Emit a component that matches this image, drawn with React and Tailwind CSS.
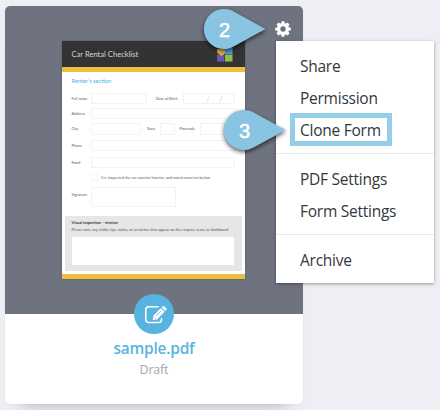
import React from "react";

function Label({ children, className = "" }) {
  return (
    <span className={`shrink-0 whitespace-nowrap text-[3.8px] leading-none text-[#5a5a5a] ${className}`}>
      {children}
    </span>
  );
}

function Field({ className = "" }) {
  return <div className={`shrink-0 border border-[#f3f3f3] ${className}`} />;
}

function FormLogo() {
  return (
    <svg className="h-[16px] w-[16px]" viewBox="0 0 16 16">
      <rect x="8" y="0" width="7.5" height="8" fill="#4a9fd8" />
      <rect x="0" y="8.5" width="7.3" height="7" fill="#6a57b5" />
      <rect x="8" y="8.5" width="7.5" height="7" fill="#8cbf4a" />
      <path d="M0 3h8v4.500L4.500 10 0 6.500z" fill="#e8b040" />
    </svg>
  );
}

function FormPreview() {
  return (
    <div className="flex h-[238px] w-[183px] flex-col bg-white font-['Lato',sans-serif] shadow-[0_0_2px_rgba(0,0,0,0.3)]">
      <div className="flex h-[26px] shrink-0 items-center justify-between bg-[#333] pr-[12px] pl-[9.5px]">
        <span className="pt-px text-[7.6px] leading-none whitespace-nowrap text-[#d6d6d6]">Car Rental Checklist</span>
        <FormLogo />
      </div>
      <div className="h-[5px] shrink-0 bg-[#edbe40]" />
      <div className="flex h-[144px] shrink-0 flex-col pl-[9.5px]">
        <div className="mt-[6px] h-[6px] shrink-0 text-[5.7px] leading-[6px] text-[#4bb8e6]">Renter’s section</div>
        <div className="mt-[9px] flex h-[11px] shrink-0 items-center">
          <Label className="w-[19.5px]">Full name</Label>
          <Field className="h-full w-[56px]" />
          <Label className="ml-[9px] w-[27px]">Date of Birth</Label>
          <div className="flex h-full w-[52px] items-center border border-[#f3f3f3] pl-[22px]">
            <svg className="h-[8px] w-[18px]" viewBox="0 0 18 8" stroke="#dedede" strokeWidth="0.7">
              <path d="M0.5 8 3.5 0M13.5 8 16.5 0" />
            </svg>
          </div>
        </div>
        <div className="mt-[4px] flex h-[11px] shrink-0 items-center">
          <Label className="w-[19.5px]">Address</Label>
          <Field className="h-full w-[144px]" />
        </div>
        <div className="mt-[4px] flex h-[12px] shrink-0 items-center">
          <Label className="w-[19.5px]">City</Label>
          <Field className="h-full w-[50px]" />
          <Label className="ml-[6px] w-[13px]">State</Label>
          <Field className="h-full w-[15px]" />
          <Label className="ml-[4.5px] w-[20px]">Postcode</Label>
          <Field className="h-full w-[35.5px]" />
        </div>
        <div className="mt-[5px] flex h-[11px] shrink-0 items-center">
          <Label className="w-[19.5px]">Phone</Label>
          <Field className="h-full w-[144px]" />
        </div>
        <div className="mt-[6px] flex h-[11px] shrink-0 items-center">
          <Label className="w-[19.5px]">Email</Label>
          <Field className="h-full w-[144px]" />
        </div>
        <div className="mt-[6px] flex h-[7px] shrink-0 items-center pl-[19.5px]">
          <Field className="h-[7px] w-[7px]" />
          <Label className="ml-[3px] text-[3.7px]">I’ve inspected the car exterior/interior, and noted concerns below.</Label>
        </div>
        <div className="mt-[6px] flex h-[20px] shrink-0 items-start">
          <Label className="mt-[6px] w-[19.5px]">Signature</Label>
          <Field className="h-[20px] w-[85px]" />
        </div>
      </div>
      <div className="mx-[3px] h-[55px] shrink-0 bg-[#e6e6e6] pt-[4px] pr-[8px] pl-[6.5px]">
        <div className="h-[6px] text-[3.9px] leading-[6px] font-bold text-[#333]">Visual inspection – interior</div>
        <div className="mt-[1px] h-[6px] text-[3.8px] leading-[6px] whitespace-nowrap text-[#555]">
          Please note any visible rips, stains, or scratches that appear on the carpets, seats, or dashboard.
        </div>
        <div className="mt-[4px] h-[28px] bg-white" />
      </div>
      <div className="mt-[3px] h-[5px] shrink-0 bg-[#edbe40]" />
    </div>
  );
}

function GearIcon() {
  return (
    <svg className="h-[16px] w-[16px]" viewBox="-8 -8 16 16">
      <g fill="#fff">
        {[0, 45, 90, 135, 180, 225, 270, 315].map((angle) => (
          <path key={angle} d="M-2-5-1.35-7.8H1.35L2-5z" transform={`rotate(${angle})`} />
        ))}
      </g>
      <circle r="4.3" fill="none" stroke="#fff" strokeWidth="3.2" />
    </svg>
  );
}

function EditIcon() {
  return (
    <svg className="h-[20px] w-[26px] shrink-0" viewBox="0 0 26 20" fill="none">
      <path
        d="M17 2.800H7.800a3 3 0 0 0-3 3v9.700a3 3 0 0 0 3 3h9.700a3 3 0 0 0 3-3V14.500"
        stroke="#fff"
        strokeWidth="1.500"
        strokeLinecap="round"
      />
      <path d="m11.700 16 .6-4.300 7.600-7.600 3.700 3.700-7.600 7.600z" fill="#fff" />
      <path d="m20.700 3.300 1.100-1.100q.6-.6 1.200 0l2.400 2.400q.6.600 0 1.200l-1.100 1.100z" fill="#fff" />
      <path d="m15 11.900 4.800-4.800" stroke="#57b4e1" strokeWidth=".9" />
      <path d="m12.800 13.300 1.500 1.500" stroke="#57b4e1" strokeWidth=".8" />
    </svg>
  );
}

function Marker({ number, className }) {
  return (
    <div className={`absolute h-[48px] w-[70px] ${className}`}>
      <svg
        className="absolute inset-0 h-[48px] w-[70px] drop-shadow-[0_2px_2px_rgba(0,0,0,0.65)]"
        viewBox="0 0 70 48"
      >
        <path d="M65.5 24 33.600 6.500A20 20 0 1 0 33.600 41.500z" fill="#89c4e2" />
      </svg>
      <span className="relative flex h-[48px] w-[48px] items-center justify-center pt-[2px] pl-px font-['Liberation_Sans',sans-serif] text-[20px] leading-none text-white [-webkit-text-stroke:0.5px_white]">
        {number}
      </span>
    </div>
  );
}

function MenuItem({ children }) {
  return <div className="flex h-8 items-center pt-px pl-6 whitespace-nowrap">{children}</div>;
}

function Menu() {
  return (
    <div className="absolute top-[41px] left-[276px] h-[242px] w-[158px] bg-white pt-[9px] font-['Open_Sans',sans-serif] text-[15.5px] leading-none tracking-[-0.25px] text-[#333740] shadow-[0_1px_3px_rgba(0,0,0,0.38)]">
      <MenuItem>Share</MenuItem>
      <MenuItem>Permission</MenuItem>
      <div className="relative">
        <MenuItem>Clone Form</MenuItem>
        <div className="absolute -top-px left-[14px] h-[33px] w-[102px] border-5 border-[#94cde6]" />
      </div>
      <div className="mt-[7px] mb-[9px] h-px bg-[#e7e7ec]" />
      <MenuItem>PDF Settings</MenuItem>
      <MenuItem>Form Settings</MenuItem>
      <div className="mt-[7px] mb-[9px] h-px bg-[#e7e7ec]" />
      <MenuItem>Archive</MenuItem>
    </div>
  );
}

export default function App() {
  return (
    <div className="relative h-[410px] w-[440px] overflow-hidden bg-[#eeeff4] pt-[6px] pl-[5px]">
      <div className="flex h-[398px] w-[298px] flex-col items-center rounded-[5px] bg-white font-['Open_Sans',sans-serif] shadow-[0_0_1px_rgba(0,0,0,0.15),0_16px_16px_-16px_rgba(60,85,85,0.4)]">
        <div className="flex h-[308px] w-full shrink-0 justify-between rounded-t-[5px] bg-[#6f7380] pt-[35px] pl-[57px]">
          <FormPreview />
          <div className="-mt-[20px] mr-[12px]">
            <GearIcon />
          </div>
        </div>
        <div className="-mt-[20px] flex h-[40px] w-[40px] shrink-0 items-center justify-center rounded-full bg-[#57b4e1]">
          <EditIcon />
        </div>
        <div className="mt-[4px] h-[20px] text-[15.5px] leading-[20px] font-semibold tracking-[-0.25px] text-[#57b4e1]">
          sample.pdf
        </div>
        <div className="mt-[3px] h-[18px] text-[12.5px] leading-[18px] tracking-[-0.2px] text-[#a3a5b1]">Draft</div>
      </div>
      <Menu />
      <Marker number={2} className="top-[5px] left-[200px]" />
      <Marker number={3} className="top-[106px] left-[220px]" />
    </div>
  );
}
